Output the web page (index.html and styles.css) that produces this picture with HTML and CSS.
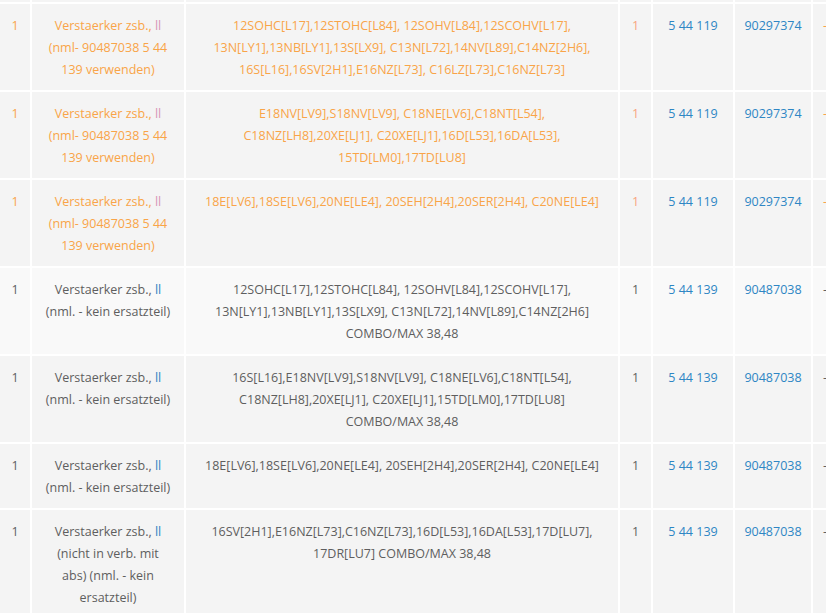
FILE: index.html
```html
<!DOCTYPE html>
<html lang="de">
<head>
<meta charset="utf-8">
<title>Teileliste</title>
<link rel="stylesheet" href="styles.css">
</head>
<body>
<table class="parts">
  <colgroup>
    <col class="c-pos"><col class="c-name"><col class="c-app"><col class="c-qty"><col class="c-nr"><col class="c-art"><col class="c-more">
  </colgroup>
  <tbody>
    <tr class="cut"><td></td><td></td><td></td><td></td><td></td><td></td><td></td></tr>
    <tr class="alt">
      <td>1</td>
      <td class="name">Verstaerker zsb., <a href="#" class="ll">ll</a><br>(nml- 90487038 5 44<br>139 verwenden)</td>
      <td class="app">12SOHC[L17],12STOHC[L84], 12SOHV[L84],12SCOHV[L17],<br>13N[LY1],13NB[LY1],13S[LX9], C13N[L72],14NV[L89],C14NZ[2H6],<br>16S[L16],16SV[2H1],E16NZ[L73], C16LZ[L73],C16NZ[L73]</td>
      <td class="qty">1</td>
      <td class="link">5 44 119</td>
      <td class="link">90297374</td>
      <td class="more">-</td>
    </tr>
    <tr class="alt">
      <td>1</td>
      <td class="name">Verstaerker zsb., <a href="#" class="ll">ll</a><br>(nml- 90487038 5 44<br>139 verwenden)</td>
      <td class="app">E18NV[LV9],S18NV[LV9], C18NE[LV6],C18NT[L54],<br>C18NZ[LH8],20XE[LJ1], C20XE[LJ1],16D[L53],16DA[L53],<br>15TD[LM0],17TD[LU8]</td>
      <td class="qty">1</td>
      <td class="link">5 44 119</td>
      <td class="link">90297374</td>
      <td class="more">-</td>
    </tr>
    <tr class="alt">
      <td>1</td>
      <td class="name">Verstaerker zsb., <a href="#" class="ll">ll</a><br>(nml- 90487038 5 44<br>139 verwenden)</td>
      <td class="app">18E[LV6],18SE[LV6],20NE[LE4], 20SEH[2H4],20SER[2H4], C20NE[LE4]</td>
      <td class="qty">1</td>
      <td class="link">5 44 119</td>
      <td class="link">90297374</td>
      <td class="more">-</td>
    </tr>
    <tr class="light">
      <td>1</td>
      <td class="name">Verstaerker zsb., <a href="#" class="ll">ll</a><br>(nml. - kein ersatzteil)</td>
      <td class="app">12SOHC[L17],12STOHC[L84], 12SOHV[L84],12SCOHV[L17],<br>13N[LY1],13NB[LY1],13S[LX9], C13N[L72],14NV[L89],C14NZ[2H6]<br>COMBO/MAX 38,48</td>
      <td class="qty">1</td>
      <td class="link">5 44 139</td>
      <td class="link">90487038</td>
      <td class="more">-</td>
    </tr>
    <tr>
      <td>1</td>
      <td class="name">Verstaerker zsb., <a href="#" class="ll">ll</a><br>(nml. - kein ersatzteil)</td>
      <td class="app">16S[L16],E18NV[LV9],S18NV[LV9], C18NE[LV6],C18NT[L54],<br>C18NZ[LH8],20XE[LJ1], C20XE[LJ1],15TD[LM0],17TD[LU8]<br>COMBO/MAX 38,48</td>
      <td class="qty">1</td>
      <td class="link">5 44 139</td>
      <td class="link">90487038</td>
      <td class="more">-</td>
    </tr>
    <tr>
      <td>1</td>
      <td class="name">Verstaerker zsb., <a href="#" class="ll">ll</a><br>(nml. - kein ersatzteil)</td>
      <td class="app">18E[LV6],18SE[LV6],20NE[LE4], 20SEH[2H4],20SER[2H4], C20NE[LE4]</td>
      <td class="qty">1</td>
      <td class="link">5 44 139</td>
      <td class="link">90487038</td>
      <td class="more">-</td>
    </tr>
    <tr>
      <td>1</td>
      <td class="name">Verstaerker zsb., <a href="#" class="ll">ll</a><br>(nicht in verb. mit<br>abs) (nml. - kein<br>ersatzteil)</td>
      <td class="app">16SV[2H1],E16NZ[L73],C16NZ[L73],16D[L53],16DA[L53],17D[LU7],<br>17DR[LU7] COMBO/MAX 38,48</td>
      <td class="qty">1</td>
      <td class="link">5 44 139</td>
      <td class="link">90487038</td>
      <td class="more">-</td>
    </tr>
  </tbody>
</table>
</body>
</html>
```

FILE: styles.css
```css
html, body {
  margin: 0;
  padding: 0;
  background: #ffffff;
  overflow: hidden;
}

body {
  font-family: "Open Sans", "Noto Sans", sans-serif;
  font-size: 12.5px;
  line-height: 22px;
  color: #5e5e5e;
}

.parts {
  border-collapse: separate;
  border-spacing: 2px;
  table-layout: fixed;
  width: 877px;
  margin: -2px 0 0 -2px;
}

.c-pos { width: 30px; }
.c-name { width: 152px; }
.c-app { width: 432px; }
.c-qty { width: 31px; }
.c-nr { width: 80px; }
.c-art { width: 76px; }
.c-more { width: 60px; }

.parts td {
  background: #f4f4f4;
  padding: 11px 2px 9px;
  vertical-align: top;
  text-align: center;
  white-space: nowrap;
}

.parts tr.cut td {
  height: 2px;
  padding: 0;
}

.parts tr.light td {
  background: #f9f9f9;
}

.parts td.more {
  text-align: left;
  padding-left: 10px;
}

.link {
  color: #2e86c4;
}

.ll {
  color: #2e86c4;
  text-decoration: none;
}

.parts tr.alt td {
  color: #f9a448;
}

.parts tr.alt td.qty {
  color: #f8a47e;
}

.parts tr.alt td.link {
  color: #2e86c4;
}

.parts tr.alt .ll {
  color: #d898b8;
}
```
